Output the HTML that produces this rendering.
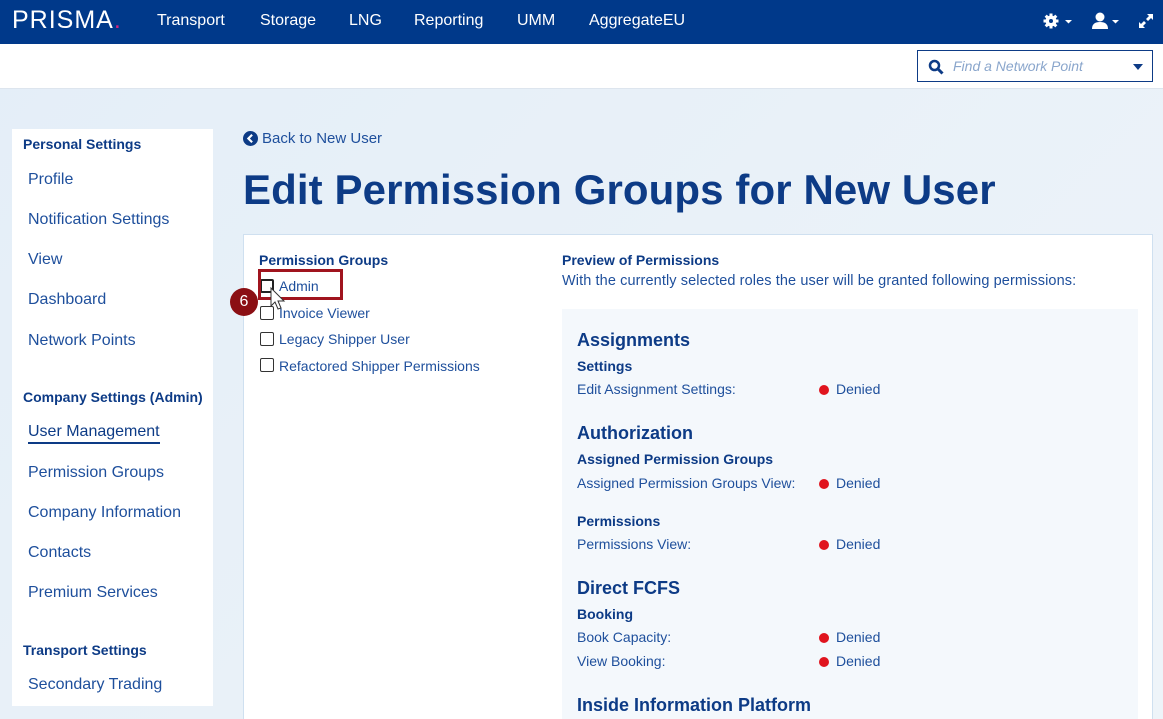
<!DOCTYPE html>
<html><head><meta charset="utf-8"><style>
*{margin:0;padding:0;box-sizing:border-box}
html,body{width:1163px;height:719px;overflow:hidden}
body{font-family:"Liberation Sans",sans-serif;background:linear-gradient(135deg,#e4eef8,#eef4f9);position:relative;color:#1a4a94}
.hdr{position:absolute;left:0;top:0;width:1163px;height:44px;background:#00398a;color:#fff}
.hdr span{position:absolute;top:12px;font-size:16px}
.sub{position:absolute;left:0;top:44px;width:1163px;height:45px;background:#fff;border-bottom:1px solid #dde5ee}
.abs{position:absolute;white-space:nowrap}
.side{position:absolute;left:12px;top:129px;width:201px;height:577px;background:#fff}
.sh{position:absolute;left:11px;font-size:14px;font-weight:bold;color:#0d3b86}
.si{position:absolute;left:16px;font-size:16px;color:#1e4f9c}
.card{position:absolute;left:243px;top:234px;width:910px;height:520px;background:#fff;border:1px solid #cfe0f0}
.prev{position:absolute;left:318px;top:74px;width:576px;height:440px;background:#f4f8fc}
.h3{position:absolute;left:15px;font-size:18px;font-weight:bold;color:#0d3b86}
.h4{position:absolute;left:15px;font-size:14px;font-weight:bold;color:#0d3b86}
.r{position:absolute;left:15px;font-size:14px;color:#1e4f9c}
.d{position:absolute;left:257px;font-size:14px;color:#1e4f9c}
.d:before{content:"";display:inline-block;width:10px;height:10px;border-radius:50%;background:#e0141e;margin-right:7px;vertical-align:-1px}
.cb{position:absolute;left:16px;width:14px;height:14px;border:1px solid #333;border-radius:2px;background:#fff}
.cl{position:absolute;left:35px;font-size:14px;color:#1e4f9c}
</style></head><body>
<div class="hdr">
<div class="abs" style="left:12px;top:6px;font-size:25px;letter-spacing:1px">PRISMA<span style="position:static;color:#d6247d;font-size:25px">.</span></div>
<span style="left:157px">Transport</span><span style="left:260px">Storage</span><span style="left:349px">LNG</span><span style="left:414px">Reporting</span><span style="left:517px">UMM</span><span style="left:589px">AggregateEU</span>
<svg class="abs" style="left:1043px;top:13px" width="30" height="18" viewBox="0 0 30 18"><circle cx="8" cy="8" r="5.5" fill="#fff"/><g stroke="#fff" stroke-width="3"><line x1="8" y1="0.5" x2="8" y2="15.5"/><line x1="0.5" y1="8" x2="15.5" y2="8"/><line x1="2.7" y1="2.7" x2="13.3" y2="13.3"/><line x1="13.3" y1="2.7" x2="2.7" y2="13.3"/></g><circle cx="8" cy="8" r="2" fill="#00398a"/><path d="M22 7h7l-3.5 3.5z" fill="#fff"/></svg>
<svg class="abs" style="left:1092px;top:12px" width="30" height="18" viewBox="0 0 30 18"><circle cx="8" cy="5" r="4.5" fill="#fff"/><path d="M0 17c0-5 3-7 8-7s8 2 8 7z" fill="#fff"/><path d="M20 8h7l-3.5 3.5z" fill="#fff"/></svg>
<svg class="abs" style="left:1138px;top:13px" width="16" height="16" viewBox="0 0 16 16" fill="#fff"><path d="M9 1h6v6l-2-2-3 3-2-2 3-3zM7 15H1V9l2 2 3-3 2 2-3 3z"/></svg>
</div>
<div class="sub"><div class="abs" style="left:917px;top:6px;width:236px;height:32px;border:1px solid #0d3b86;background:#fff">
<svg class="abs" style="left:10px;top:8px" width="16" height="16" viewBox="0 0 16 16"><circle cx="6.5" cy="6.5" r="4.5" fill="none" stroke="#0d3b86" stroke-width="2.5"/><line x1="10" y1="10" x2="14.5" y2="14.5" stroke="#0d3b86" stroke-width="3"/></svg>
<div class="abs" style="left:35px;top:7px;font-size:14px;font-style:italic;color:#8aa6cc">Find a Network Point</div>
<svg class="abs" style="left:215px;top:13px" width="10" height="6"><path d="M0 0h10L5 6z" fill="#0d3b86"/></svg></div></div>
<div class="side">
<div class="sh" style="top:7px">Personal Settings</div>
<div class="si" style="top:42px">Profile</div>
<div class="si" style="top:82px">Notification Settings</div>
<div class="si" style="top:122px">View</div>
<div class="si" style="top:162px">Dashboard</div>
<div class="si" style="top:203px">Network Points</div>
<div class="sh" style="top:260px">Company Settings (Admin)</div>
<div class="si" style="top:294px;border-bottom:2px solid #0d3b86;padding-bottom:1px;color:#0d3b86">User Management</div>
<div class="si" style="top:335px">Permission Groups</div>
<div class="si" style="top:375px">Company Information</div>
<div class="si" style="top:415px">Contacts</div>
<div class="si" style="top:455px">Premium Services</div>
<div class="sh" style="top:513px">Transport Settings</div>
<div class="si" style="top:547px">Secondary Trading</div>
</div>
<svg class="abs" style="left:243px;top:131px" width="15" height="15" viewBox="0 0 14 14"><circle cx="7" cy="7" r="7" fill="#0d3b86"/><path d="M8.5 3.5L5 7l3.5 3.5" fill="none" stroke="#fff" stroke-width="2"/></svg>
<div class="abs" style="left:262px;top:130px;font-size:15px;color:#1e4f9c">Back to New User</div>
<div class="abs" style="left:243px;top:166px;font-size:42px;font-weight:bold;color:#0d3b86;letter-spacing:0.1px">Edit Permission Groups for New User</div>
<div class="card">
<div class="abs" style="left:15px;top:17px;font-size:14px;font-weight:bold;color:#0d3b86">Permission Groups</div>
<div class="cb" style="top:44px;border:2px solid #222"></div><div class="cl" style="top:43px">Admin</div>
<div class="cb" style="top:71px"></div><div class="cl" style="top:70px">Invoice Viewer</div>
<div class="cb" style="top:97px"></div><div class="cl" style="top:96px">Legacy Shipper User</div>
<div class="cb" style="top:123px"></div><div class="cl" style="top:123px">Refactored Shipper Permissions</div>
<div class="abs" style="left:14px;top:34px;width:85px;height:31px;border:3px solid #a0141e"></div>
<div class="abs" style="left:-14px;top:53px;width:28px;height:28px;border-radius:50%;background:#8b0f14;color:#fff;font-size:16px;text-align:center;line-height:28px">6</div>
<svg class="abs" style="left:25px;top:52px" width="20" height="26" viewBox="0 0 20 26"><path d="M2 1v18l4-4 3 7 3-1-3-7h6z" fill="#fff" stroke="#333" stroke-width="1"/></svg>
<div class="abs" style="left:318px;top:17px;font-size:14px;font-weight:bold;color:#0d3b86">Preview of Permissions</div>
<div class="abs" style="left:318px;top:38px;font-size:14.5px;color:#1e4f9c;letter-spacing:0.1px">With the currently selected roles the user will be granted following permissions:</div>
<div class="prev">
<div class="h3" style="top:21px">Assignments</div>
<div class="h4" style="top:49px">Settings</div>
<div class="r" style="top:72px">Edit Assignment Settings:</div><div class="d" style="top:72px">Denied</div>
<div class="h3" style="top:114px">Authorization</div>
<div class="h4" style="top:142px">Assigned Permission Groups</div>
<div class="r" style="top:166px">Assigned Permission Groups View:</div><div class="d" style="top:166px">Denied</div>
<div class="h4" style="top:204px">Permissions</div>
<div class="r" style="top:227px">Permissions View:</div><div class="d" style="top:227px">Denied</div>
<div class="h3" style="top:269px">Direct FCFS</div>
<div class="h4" style="top:297px">Booking</div>
<div class="r" style="top:320px">Book Capacity:</div><div class="d" style="top:320px">Denied</div>
<div class="r" style="top:344px">View Booking:</div><div class="d" style="top:344px">Denied</div>
<div class="h3" style="top:386px">Inside Information Platform</div>
</div>
</div>
</body></html>
